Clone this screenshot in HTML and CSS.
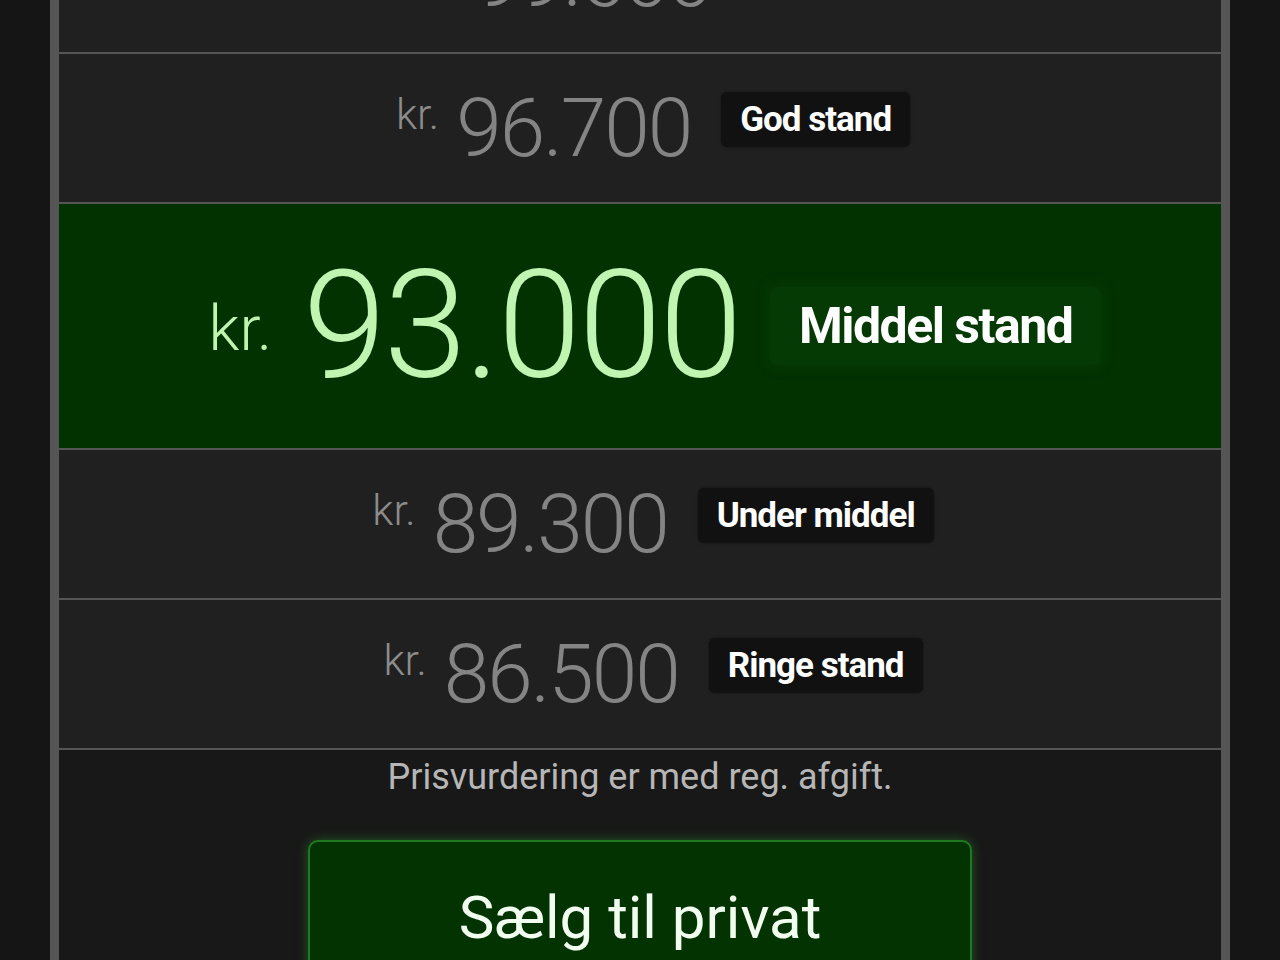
FILE: index.html
```html
<!DOCTYPE html>
<html lang="da">
<head>
    <meta charset="UTF-8">
    <meta name="viewport" content="width=device-width, initial-scale=1.0">
    <title>Prisvurdering</title>
    <link rel="stylesheet" href="styles.css">
</head>
<body>
    <div class="sheet">
        <div class="price-row">
            <div class="price"><span class="cur">kr.</span><span class="amount">99.600</span></div>
            <div class="badge">Som ny</div>
        </div>
        <div class="price-row">
            <div class="price"><span class="cur">kr.</span><span class="amount">96.700</span></div>
            <div class="badge">God stand</div>
        </div>
        <div class="price-row active">
            <div class="price"><span class="cur">kr.</span><span class="amount">93.000</span></div>
            <div class="badge">Middel stand</div>
        </div>
        <div class="price-row">
            <div class="price"><span class="cur">kr.</span><span class="amount">89.300</span></div>
            <div class="badge">Under middel</div>
        </div>
        <div class="price-row">
            <div class="price"><span class="cur">kr.</span><span class="amount">86.500</span></div>
            <div class="badge">Ringe stand</div>
        </div>
        <div class="sheet-footer">
            <p class="note">Prisvurdering er med reg. afgift.</p>
            <button class="sell-button">Sælg til privat</button>
        </div>
    </div>
</body>
</html>
```

FILE: styles.css
```css
html, body {
    margin: 0;
    height: 100%;
    overflow: hidden;
}

body {
    font-family: Roboto, "Noto Sans", Arial, sans-serif;
    background-color: #151515;
}

.sheet {
    margin: -96px 50px 0;
    border-left: 9px solid #555;
    border-right: 9px solid #555;
    background-color: #181818;
}

.price-row {
    height: 150px;
    box-sizing: border-box;
    border-bottom: 2px solid #555;
    background-color: #202020;
    display: flex;
    align-items: center;
    justify-content: center;
    padding: 0 0 0 26px;
}

.price {
    font-size: 82px;
    font-weight: 300;
    line-height: normal;
    color: #848484;
    white-space: nowrap;
}

.cur {
    font-size: 43px;
    vertical-align: 27px;
    margin-right: 17px;
    color: #8c8c8c;
}

.amount {
    letter-spacing: -2px;
}

.badge {
    margin: 0 0 17px 30px;
    padding: 7px 19px;
    background-color: #111;
    border-radius: 6px;
    color: #fff;
    font-size: 35px;
    font-weight: 700;
    letter-spacing: -1px;
    white-space: nowrap;
    box-shadow: 0 0 3px rgba(0, 0, 0, 0.4);
}

.price-row.active {
    height: 246px;
    background-color: #023200;
    padding-left: 30px;
}

.active .price {
    font-size: 150px;
    color: #bff4b1;
}

.active .cur {
    font-size: 63px;
    margin-right: 31px;
    color: #bff4b1;
}

.active .amount {
    letter-spacing: -2.5px;
}

.active .badge {
    margin: 0 0 0 30px;
    padding: 10px 29px;
    background-color: #053a05;
    border-radius: 8px;
    font-size: 50px;
    letter-spacing: -1.5px;
    box-shadow: 0 0 10px 4px #043804;
}

.sheet-footer {
    padding: 6px 0 200px;
    text-align: center;
}

.note {
    margin: 0 0 42px;
    font-size: 36px;
    color: #b6b6b6;
}

.sell-button {
    width: 664px;
    padding: 40px 0 60px;
    background-color: #023300;
    border: 2px solid #1f7a1f;
    border-radius: 10px;
    color: #f2fff0;
    font-family: Roboto, "Noto Sans", Arial, sans-serif;
    font-size: 60px;
    box-shadow: 0 0 12px rgba(60, 200, 60, 0.35);
    cursor: pointer;
}
```
